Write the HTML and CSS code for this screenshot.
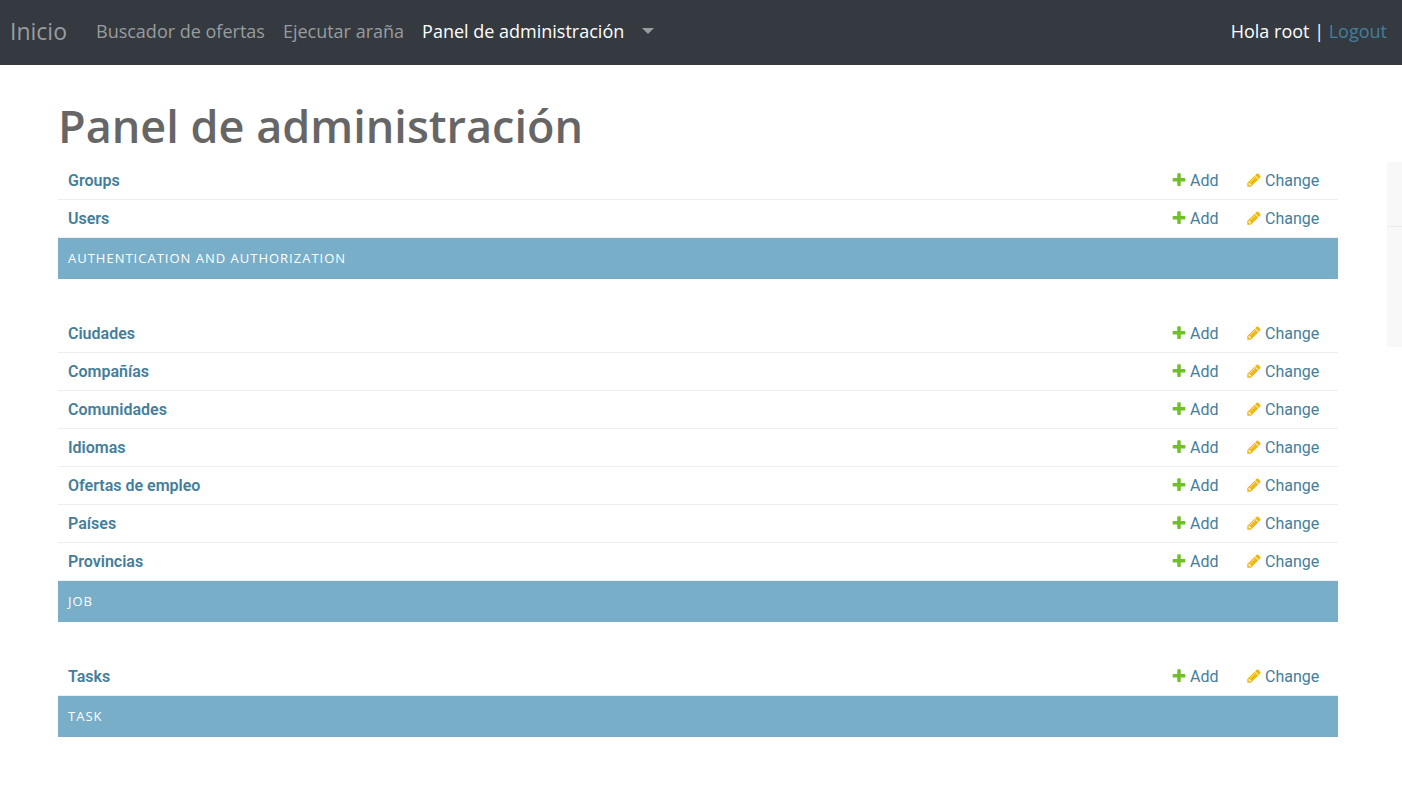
FILE: index.html
```html
<!DOCTYPE html>
<html lang="es">
<head>
<meta charset="utf-8">
<meta name="viewport" content="width=device-width, initial-scale=1">
<title>Panel de administración</title>
<link rel="stylesheet" href="styles.css">
</head>
<body>
<svg class="sprite" aria-hidden="true">
  <symbol id="plus" viewBox="128 160 1536 1536"><path fill="#70bf2b" d="M1600 796v192q0 40-28 68t-68 28h-416v416q0 40-28 68t-68 28h-192q-40 0-68-28t-28-68v-416h-416q-40 0-68-28t-28-68v-192q0-40 28-68t68-28h416v-416q0-40 28-68t68-28h192q40 0 68 28t28 68v416h416q40 0 68 28t28 68z"/></symbol>
  <symbol id="pencil" viewBox="96 96 1600 1600"><path fill="#efb80b" d="M491 1536l91-91-235-235-91 91v107h128v128h107zm523-928q0-22-22-22-10 0-17 7l-542 542q-7 7-7 17 0 22 22 22 10 0 17-7l542-542q7-7 7-17zm-54-192l416 416-832 832h-416v-416zm683 96q0 53-37 90l-166 166-416-416 166-165q36-38 90-38 53 0 91 38l235 234q37 39 37 91z"/></symbol>
</svg>
<header class="navbar">
  <a class="brand" href="#">Inicio</a>
  <nav class="nav">
    <a class="nav-link" href="#">Buscador de ofertas</a>
    <a class="nav-link" href="#">Ejecutar araña</a>
    <a class="nav-link active" href="#">Panel de administración</a>
    <button class="toggle" type="button" aria-label="Más opciones"><span class="caret"></span></button>
  </nav>
  <div class="user">Hola root | <a href="#">Logout</a></div>
</header>
<div class="page">
  <h1>Panel de administración</h1>
  <div class="columns">
    <main class="content">
      <table class="module">
        <caption>Authentication and Authorization</caption>
        <tbody>
        <tr><th scope="row"><a href="#">Groups</a></th><td class="add"><a href="#"><svg class="icon"><use href="#plus"/></svg>Add</a></td><td class="change"><a href="#"><svg class="icon"><use href="#pencil"/></svg>Change</a></td></tr>
        <tr><th scope="row"><a href="#">Users</a></th><td class="add"><a href="#"><svg class="icon"><use href="#plus"/></svg>Add</a></td><td class="change"><a href="#"><svg class="icon"><use href="#pencil"/></svg>Change</a></td></tr>
        </tbody>
      </table>
      <table class="module">
        <caption>Job</caption>
        <tbody>
        <tr><th scope="row"><a href="#">Ciudades</a></th><td class="add"><a href="#"><svg class="icon"><use href="#plus"/></svg>Add</a></td><td class="change"><a href="#"><svg class="icon"><use href="#pencil"/></svg>Change</a></td></tr>
        <tr><th scope="row"><a href="#">Compañías</a></th><td class="add"><a href="#"><svg class="icon"><use href="#plus"/></svg>Add</a></td><td class="change"><a href="#"><svg class="icon"><use href="#pencil"/></svg>Change</a></td></tr>
        <tr><th scope="row"><a href="#">Comunidades</a></th><td class="add"><a href="#"><svg class="icon"><use href="#plus"/></svg>Add</a></td><td class="change"><a href="#"><svg class="icon"><use href="#pencil"/></svg>Change</a></td></tr>
        <tr><th scope="row"><a href="#">Idiomas</a></th><td class="add"><a href="#"><svg class="icon"><use href="#plus"/></svg>Add</a></td><td class="change"><a href="#"><svg class="icon"><use href="#pencil"/></svg>Change</a></td></tr>
        <tr><th scope="row"><a href="#">Ofertas de empleo</a></th><td class="add"><a href="#"><svg class="icon"><use href="#plus"/></svg>Add</a></td><td class="change"><a href="#"><svg class="icon"><use href="#pencil"/></svg>Change</a></td></tr>
        <tr><th scope="row"><a href="#">Países</a></th><td class="add"><a href="#"><svg class="icon"><use href="#plus"/></svg>Add</a></td><td class="change"><a href="#"><svg class="icon"><use href="#pencil"/></svg>Change</a></td></tr>
        <tr><th scope="row"><a href="#">Provincias</a></th><td class="add"><a href="#"><svg class="icon"><use href="#plus"/></svg>Add</a></td><td class="change"><a href="#"><svg class="icon"><use href="#pencil"/></svg>Change</a></td></tr>
        </tbody>
      </table>
      <table class="module">
        <caption>Task</caption>
        <tbody>
        <tr><th scope="row"><a href="#">Tasks</a></th><td class="add"><a href="#"><svg class="icon"><use href="#plus"/></svg>Add</a></td><td class="change"><a href="#"><svg class="icon"><use href="#pencil"/></svg>Change</a></td></tr>
        </tbody>
      </table>
    </main>
    <aside class="sidebar">
      <div class="sidebar-head"></div>
      <div class="sidebar-body"></div>
    </aside>
  </div>
</div>
</body>
</html>
```
FILE: styles.css
```css
* { box-sizing: border-box; }

body {
  margin: 0;
  background: #fff;
  color: #666;
  font-family: "Open Sans", "Noto Sans", sans-serif;
}

a { color: #447e9b; text-decoration: none; }

.sprite { display: none; }

.navbar {
  display: flex;
  align-items: center;
  min-height: 65px;
  padding: 0 15px 4px 10px;
  background: #343a40;
  font-size: 18px;
  line-height: 28px;
}

.brand {
  margin-right: 29px;
  color: #999c9f;
  font-size: 23px;
}

.nav { display: flex; align-items: center; gap: 18px; flex: 1; }
.nav-link { color: #999c9f; }
.nav-link.active { color: #fff; }

.toggle {
  display: flex;
  padding: 8px 0;
  border: 0;
  background: none;
}

.caret {
  border: 6px solid transparent;
  border-top-color: #999c9f;
  border-bottom: 0;
}

.user { color: #fff; }

.page { padding: 31px 0 60px 58px; }

h1 {
  margin: 0;
  padding-bottom: 6px;
  font-size: 45px;
  font-weight: 600;
  line-height: 60px;
}

.columns { display: flex; align-items: flex-start; gap: 49px; }
.content { flex: 1; }

.module {
  width: 100%;
  margin-bottom: 36px;
  border-collapse: separate;
  border-spacing: 0;
  font-family: Roboto, sans-serif;
  font-size: 16px;
  line-height: 21px;
}

.module caption {
  caption-side: bottom;
  padding: 10px;
  background: #79aec8;
  color: #fff;
  font-family: "Open Sans", "Noto Sans", sans-serif;
  font-size: 13px;
  letter-spacing: 1px;
  text-align: left;
  text-transform: uppercase;
}

.module th,
.module td {
  padding: 8px 10px;
  border-bottom: 1px solid #eee;
  text-align: left;
}

.module th { font-weight: 600; }
.module .add { width: 75px; }
.module .change { width: 101px; }
.module td a { display: flex; align-items: flex-start; gap: 4px; }

.icon { width: 14px; height: 14px; margin-top: 3px; }

.sidebar { width: 15px; background: #f8f8f8; }
.sidebar-head { height: 65px; border-bottom: 1px solid #eaeaea; }
.sidebar-body { height: 120px; }
```
